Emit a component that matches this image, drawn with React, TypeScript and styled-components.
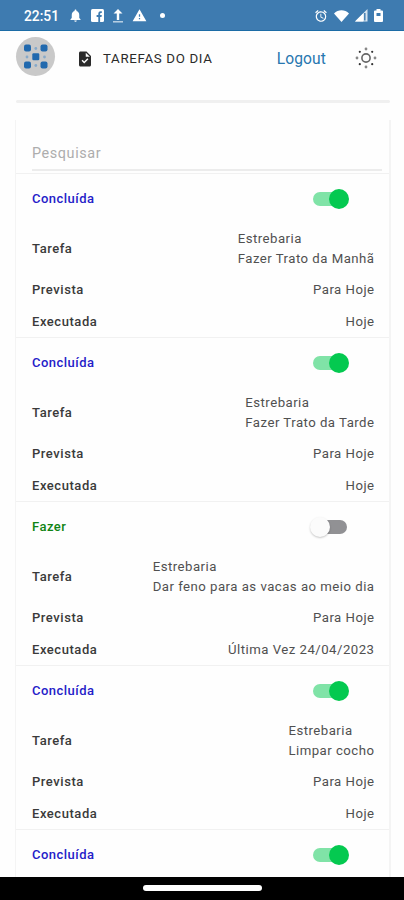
import React from "react";
import styled, { createGlobalStyle } from "styled-components";
import { MdAlarm, MdNotifications, MdTask, MdWarning } from "react-icons/md";

const GlobalStyle = createGlobalStyle`
  * { box-sizing: border-box; }
  body {
    margin: 0;
    background: #fff;
    font-family: Roboto, "Liberation Sans", sans-serif;
  }
`;

const Screen = styled.div`
  width: 404px;
  height: 900px;
  display: flex;
  flex-direction: column;
  overflow: hidden;
  background: #fefefe;
`;

const StatusBar = styled.div`
  flex: none;
  height: 31px;
  padding: 1px 21px 0 24px;
  display: flex;
  align-items: center;
  justify-content: space-between;
  background: #3e7bb0;
  border-bottom: 1px solid #1c6ca6;
  color: #fff;
`;

const StatusGroup = styled.div<{ $gap: number }>`
  display: flex;
  align-items: center;
  gap: ${(p) => p.$gap}px;
  svg { display: block; flex: none; }
`;

const Clock = styled.span`
  width: 36px;
  font-size: 13.8px;
  font-weight: 500;
  line-height: 16px;
  white-space: nowrap;
`;

const Dot = styled.span`
  width: 5px;
  height: 5px;
  margin-left: 5px;
  border-radius: 50%;
  background: #fff;
`;

const Header = styled.header`
  flex: none;
  height: 69px;
  padding: 6px 27px 0 16px;
  display: flex;
  align-items: flex-start;
`;

const Avatar = styled.div`
  width: 39px;
  height: 39px;
  border-radius: 50%;
  background: #c9c9c9;
  svg { display: block; }
`;

const Title = styled.h1`
  flex: 1;
  margin: 0;
  padding: 12px 0 0 21px;
  display: flex;
  align-items: center;
  gap: 9px;
  color: #2a2a2a;
  font-size: 13.3px;
  font-weight: 400;
  line-height: 20px;
  letter-spacing: 0.66px;
  white-space: nowrap;
  svg { flex: none; }
`;

const Logout = styled.a`
  padding-top: 12px;
  margin-right: 29px;
  color: #2877b0;
  font-size: 15.6px;
  line-height: 20px;
  letter-spacing: 0.12px;
`;

const ThemeIcon = styled.div`
  padding-top: 10px;
  svg { display: block; }
`;

const Divider = styled.div`
  flex: none;
  height: 3px;
  margin: 0 14px 0 16px;
  border-radius: 2px;
  background: #f0f0f0;
`;

const Panel = styled.main`
  flex: 1;
  min-height: 0;
  overflow: hidden;
  margin: 17px 13px 0 15px;
  border: solid #f4f4f4;
  border-width: 0 2px 0 1px;
`;

const Search = styled.input`
  display: block;
  width: 350px;
  height: 51px;
  margin: 0 0 2px 16px;
  padding: 17px 0 0;
  border: 0;
  border-bottom: 2px solid #ececec;
  outline: 0;
  background: transparent;
  font: 400 14.4px/20px Roboto, sans-serif;
  letter-spacing: 0.6px;
  &::placeholder { color: #adadad; opacity: 1; }
`;

const Record = styled.section`
  padding: 0 15px 0 16px;
  border-top: 1px solid #f1f1f1;
  color: #505050;
  font-size: 13.2px;
  line-height: 20px;
  letter-spacing: 0.48px;
`;

const Row = styled.div<{ $height: number }>`
  height: ${(p) => p.$height}px;
  display: flex;
  align-items: center;
  justify-content: space-between;
`;

const Label = styled.span`
  color: #3a3a3a;
  font-weight: 500;
  font-size: 13px;
  letter-spacing: 0.55px;
`;

const Status = styled.span<{ $done: boolean }>`
  color: ${(p) => (p.$done ? "#2420c8" : "#108414")};
  font-size: 13px;
  font-weight: 500;
`;

const Value = styled.span`
  margin-right: -0.5px;
  white-space: nowrap;
`;

const Track = styled.button<{ $on: boolean }>`
  width: 34px;
  height: 14px;
  margin-right: 27px;
  padding: 0;
  border: 0;
  border-radius: 7px;
  display: flex;
  align-items: center;
  background: ${(p) => (p.$on ? "#80e3a7" : "#919194")};
  justify-content: ${(p) => (p.$on ? "flex-end" : "flex-start")};
`;

const Thumb = styled.span<{ $on: boolean }>`
  flex: none;
  width: 20px;
  height: 20px;
  margin: ${(p) => (p.$on ? "0 -2px 0 0" : "0 0 0 -3px")};
  border-radius: 50%;
  background: ${(p) => (p.$on ? "#04c950" : "#fbfbfb")};
  box-shadow: ${(p) => (p.$on ? "none" : "0 1px 2px rgba(0,0,0,0.22)")};
`;

const NavigationBar = styled.div`
  flex: none;
  height: 23px;
  display: flex;
  justify-content: center;
  align-items: center;
  background: #000;
`;

const HomeHandle = styled.div`
  width: 119px;
  height: 6px;
  margin-top: -1px;
  border-radius: 3px;
  background: #fff;
`;

type Task = {
  done: boolean;
  details?: { description: string; executed: string };
};

const tasks: Task[] = [
  { done: true, details: { description: "Fazer Trato da Manhã", executed: "Hoje" } },
  { done: true, details: { description: "Fazer Trato da Tarde", executed: "Hoje" } },
  {
    done: false,
    details: { description: "Dar feno para as vacas ao meio dia", executed: "Última Vez 24/04/2023" },
  },
  { done: true, details: { description: "Limpar cocho", executed: "Hoje" } },
  { done: true },
];

function LogoMark() {
  return (
    <svg width="39" height="39" viewBox="0 0 39 39" fill="#2169ae">
      <rect x="8" y="7.5" width="7" height="7" rx="2" />
      <rect x="24.5" y="7.5" width="7" height="7" rx="2" />
      <rect x="16.3" y="16.3" width="7" height="7" rx="1.2" />
      <rect x="8" y="24.5" width="7" height="7" rx="2" />
      <rect x="24.5" y="24.5" width="7" height="7" rx="2" />
      <g fill="#86a9ca">
        <circle cx="19.8" cy="11.5" r="1.4" />
        <circle cx="11" cy="20" r="1.4" />
        <circle cx="28.5" cy="20" r="1.4" />
        <circle cx="19.8" cy="28.5" r="1.4" />
      </g>
    </svg>
  );
}

function FacebookIcon() {
  return (
    <svg width="13" height="13" viewBox="0 0 13 13">
      <rect width="13" height="13" rx="1.5" fill="#fff" />
      <path d="M7.3 13V7.9H5.6V6h1.7V4.7c0-1.7 1-2.5 2.4-2.5h1.1V4H9.9c-.6 0-.8.3-.8.9V6h1.7l-.3 1.9H9.1V13" fill="#3e7bb0" />
    </svg>
  );
}

function UploadIcon() {
  return (
    <svg width="12" height="14" viewBox="0 0 12 14">
      <path d="M6 0l4.5 4.5H7.2V11H4.8V4.5H1.5z" fill="#fff" />
      <path d="M1 12.8h10" stroke="#c5d8e8" strokeWidth="1.4" />
    </svg>
  );
}

function WifiIcon() {
  return (
    <svg width="15" height="12" viewBox="0 0 15 12">
      <path d="M0 3.4C4.2-.8 10.8-.8 15 3.4L7.5 12z" fill="#fff" />
    </svg>
  );
}

function SignalIcon() {
  return (
    <svg width="13" height="13" viewBox="0 0 13 13">
      <path d="M0 12.5L12.5 0v12.5z" fill="#d5e3ef" />
      <path d="M0 12.5L8.3 4.2v8.3z" fill="#fff" />
      <path d="M9.8 4v7.5" stroke="#3e7bb0" strokeWidth="1.4" />
    </svg>
  );
}

function BatteryIcon() {
  return (
    <svg width="9" height="13" viewBox="0 0 9 13">
      <path d="M2.5 0h4v1.5H8q1 0 1 1V12q0 1-1 1H1q-1 0-1-1V2.5q0-1 1-1h1.5z" fill="#fff" />
      <rect x="2.5" y="4" width="4" height="3" fill="#3e7bb0" />
    </svg>
  );
}

function SunIcon() {
  return (
    <svg width="22" height="22" viewBox="0 0 22 22">
      <circle cx="11" cy="11" r="4.1" fill="none" stroke="#666" strokeWidth="1.6" />
      <g fill="#888">
        <circle cx="11" cy="2" r="1.4" />
        <circle cx="11" cy="20" r="1.4" />
        <circle cx="2" cy="11" r="1.4" />
        <circle cx="20" cy="11" r="1.4" />
      </g>
      <g fill="#333">
        <circle cx="4.8" cy="4.8" r="1.1" />
        <circle cx="17.2" cy="4.8" r="1.1" />
        <circle cx="4.8" cy="17.2" r="1.1" />
        <circle cx="17.2" cy="17.2" r="1.1" />
      </g>
    </svg>
  );
}

function TaskRecord({ task }: { task: Task }) {
  return (
    <Record>
      <Row $height={50}>
        <Status $done={task.done}>{task.done ? "Concluída" : "Fazer"}</Status>
        <Track $on={task.done} role="switch" aria-checked={task.done}>
          <Thumb $on={task.done} />
        </Track>
      </Row>
      {task.details && (
        <>
          <Row $height={50}>
            <Label>Tarefa</Label>
            <Value>
              Estrebaria
              <br />
              {task.details.description}
            </Value>
          </Row>
          <Row $height={32}>
            <Label>Prevista</Label>
            <Value>Para Hoje</Value>
          </Row>
          <Row $height={31}>
            <Label>Executada</Label>
            <Value>{task.details.executed}</Value>
          </Row>
        </>
      )}
    </Record>
  );
}

export default function App() {
  return (
    <>
      <GlobalStyle />
      <Screen>
        <StatusBar>
          <StatusGroup $gap={8}>
            <Clock>22:51</Clock>
            <MdNotifications size={15} />
            <FacebookIcon />
            <UploadIcon />
            <MdWarning size={15} />
            <Dot />
          </StatusGroup>
          <StatusGroup $gap={6}>
            <MdAlarm size={14} />
            <WifiIcon />
            <SignalIcon />
            <BatteryIcon />
          </StatusGroup>
        </StatusBar>
        <Header>
          <Avatar>
            <LogoMark />
          </Avatar>
          <Title>
            <MdTask size={18} />
            TAREFAS DO DIA
          </Title>
          <Logout>Logout</Logout>
          <ThemeIcon>
            <SunIcon />
          </ThemeIcon>
        </Header>
        <Divider />
        <Panel>
          <Search placeholder="Pesquisar" />
          {tasks.map((task, index) => (
            <TaskRecord key={index} task={task} />
          ))}
        </Panel>
        <NavigationBar>
          <HomeHandle />
        </NavigationBar>
      </Screen>
    </>
  );
}
